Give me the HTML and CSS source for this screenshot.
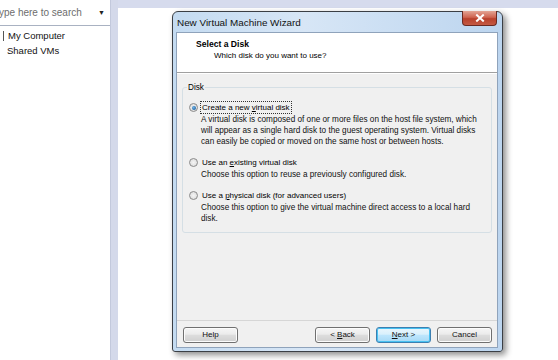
FILE: index.html
```html
<!DOCTYPE html>
<html>
<head>
<meta charset="utf-8">
<link rel="stylesheet" href="styles.css">
</head>
<body>
<div class="app">
  <aside class="sidebar">
    <div class="search">
      <span class="search-text">ype here to search</span>
      <span class="caret">&#9660;</span>
    </div>
    <ul class="tree">
      <li class="tree-item"><span class="tick"></span>My Computer</li>
      <li class="tree-item shared">Shared VMs</li>
    </ul>
  </aside>
  <div class="splitter"></div>
  <main class="main">
    <div class="topstrip"></div>
    <div class="desktop">
      <section class="dialog">
        <div class="titlebar">
          <span class="title">New Virtual Machine Wizard</span>
          <span class="close"><svg width="10" height="8" viewBox="0 0 10 8"><path d="M2 1.2 L8 6.8 M8 1.2 L2 6.8" stroke="#fff" stroke-width="2" stroke-linecap="square"/></svg></span>
        </div>
        <div class="client">
          <header class="header">
            <div class="h-title">Select a Disk</div>
            <div class="h-sub">Which disk do you want to use?</div>
          </header>
          <div class="content">
            <fieldset class="group">
              <legend class="legend">Disk</legend>
              <div class="option">
                <div class="opt-row"><span class="radio checked"></span><span class="opt-label focus">Create a new <u>v</u>irtual disk</span></div>
                <p class="desc">A virtual disk is composed of one or more files on the host file system, which will appear as a single hard disk to the guest operating system. Virtual disks can easily be copied or moved on the same host or between hosts.</p>
              </div>
              <div class="option">
                <div class="opt-row"><span class="radio"></span><span class="opt-label">Use an <u>e</u>xisting virtual disk</span></div>
                <p class="desc">Choose this option to reuse a previously configured disk.</p>
              </div>
              <div class="option">
                <div class="opt-row"><span class="radio"></span><span class="opt-label">Use a <u>p</u>hysical disk (for advanced users)</span></div>
                <p class="desc">Choose this option to give the virtual machine direct access to a local hard disk.</p>
              </div>
            </fieldset>
          </div>
          <footer class="footer">
            <button class="btn">Help</button>
            <span class="spacer"></span>
            <button class="btn">&lt; <u>B</u>ack</button>
            <button class="btn default"><u>N</u>ext &gt;</button>
            <button class="btn">Cancel</button>
          </footer>
        </div>
      </section>
    </div>
  </main>
</div>
</body>
</html>
```
FILE: styles.css
```css
* { box-sizing: border-box; }
html, body { margin: 0; padding: 0; }
body {
  width: 558px;
  height: 360px;
  overflow: hidden;
  background: #fff;
  font-family: "Liberation Sans", Arial, sans-serif;
  color: #000;
}
.app { display: flex; width: 558px; height: 360px; }

.sidebar { width: 110px; display: flex; flex-direction: column; background: #fff; }
.search {
  height: 26px;
  border-bottom: 1px solid #a9b2c2;
  display: flex;
  align-items: center;
  padding: 0 5px 0 0;
  font-size: 10px;
  color: #6d6d6d;
}
.search-text { flex: 1; margin-left: -1px; }
.caret { font-size: 7px; color: #222; }
.tree { list-style: none; margin: 0; padding: 2px 0 0 0; font-size: 9.5px; color: #111; }
.tree-item { height: 15px; line-height: 15px; padding-left: 8px; position: relative; }
.tree-item.shared { padding-left: 7px; }
.tick { position: absolute; left: 3px; top: 3px; width: 1px; height: 10px; background: #555; }

.splitter { width: 8px; background: #d4d9ea; border-left: 1px solid #c3c9dc; }

.main { flex: 1; display: flex; flex-direction: column; }
.topstrip { height: 8px; background: #d6dbed; }
.desktop { flex: 1; background: #fff; padding: 3px 0 0 54px; }

.dialog {
  width: 331px;
  height: 341px;
  border: 1px solid #3b3f45;
  border-radius: 6px 6px 3px 3px;
  background: linear-gradient(90deg, #c4dbf1 0%, #d7e6f6 40%, #bcd5ef 100%);
  box-shadow: 3px 3px 6px rgba(0,0,0,0.45);
  display: flex;
  flex-direction: column;
  padding: 0 4px 3px 3px;
}
.titlebar {
  height: 20px;
  position: relative;
  display: flex;
  align-items: center;
  padding-left: 1px;
}
.title { font-size: 9.9px; color: #111; }
.close {
  position: absolute;
  right: 1px;
  top: -1px;
  width: 35px;
  height: 15px;
  border: 1px solid #6b2a22;
  border-top: none;
  border-radius: 0 0 4px 4px;
  background: linear-gradient(#e3a595 0%, #cf6450 45%, #b8412c 55%, #c45a44 100%);
  display: flex;
  align-items: center;
  justify-content: center;
}
.client {
  flex: 1;
  display: flex;
  flex-direction: column;
  border: 1px solid #8fa3bb;
  background: #f0f0f0;
}
.header {
  height: 40px;
  background: #fff;
  border-bottom: 1px solid #a0a0a0;
  box-shadow: 0 1px 0 #fff;
  padding: 5px 0 0 19px;
}
.h-title { font-size: 8.6px; font-weight: bold; line-height: 12px; }
.h-sub { font-size: 8px; line-height: 12px; padding-left: 18px; }

.content { flex: 1; padding: 10px 5px 0 5px; }
.group {
  margin: 0;
  height: 150px;
  border: 1px solid #d5dfe5;
  border-radius: 3px;
  padding: 9px 0 0 6px;
}
.legend { font-size: 8.2px; padding: 0 1px; margin-left: -2px; }
.option { margin-bottom: 9px; }
.opt-row { display: flex; align-items: center; height: 13px; font-size: 8px; }
.radio {
  width: 9px; height: 9px;
  border-radius: 50%;
  border: 1px solid #8a8a8a;
  background: radial-gradient(circle, #f4f4f4 0%, #d9d9d9 100%);
  margin-right: 3px;
  position: relative;
}
.radio.checked::after {
  content: "";
  position: absolute;
  left: 1.5px; top: 1.5px;
  width: 4px; height: 4px;
  border-radius: 50%;
  background: radial-gradient(circle at 40% 40%, #6fb4e8 0%, #1a5e9e 80%);
}
.opt-label { padding: 0 1px; line-height: 11px; }
.opt-label.focus { outline: 1px dotted #333; outline-offset: 0; }
.desc {
  margin: 0;
  padding-left: 12px;
  padding-right: 14px;
  font-size: 8.2px;
  line-height: 11px;
  color: #111;
}
.footer {
  height: 27px;
  border-top: 1px solid #d6d6d6;
  display: flex;
  align-items: center;
  padding: 1px 5px 0 6px;
  gap: 6px;
}
.spacer { flex: 1; }
.btn {
  width: 55px;
  height: 16px;
  padding: 0;
  font-family: "Liberation Sans", Arial, sans-serif;
  font-size: 8px;
  color: #111;
  border: 1px solid #707070;
  border-radius: 3px;
  background: linear-gradient(#f6f6f6 0%, #ebebeb 45%, #dddddd 50%, #cfcfcf 100%);
  box-shadow: inset 0 0 0 1px #fcfcfc;
}
.btn.default {
  border-color: #3c7fb1;
  box-shadow: inset 0 0 0 1px #48c1f1;
  background: linear-gradient(#eaf6fd 0%, #d9f0fc 45%, #bee6fd 50%, #a7d9f5 100%);
}
```
